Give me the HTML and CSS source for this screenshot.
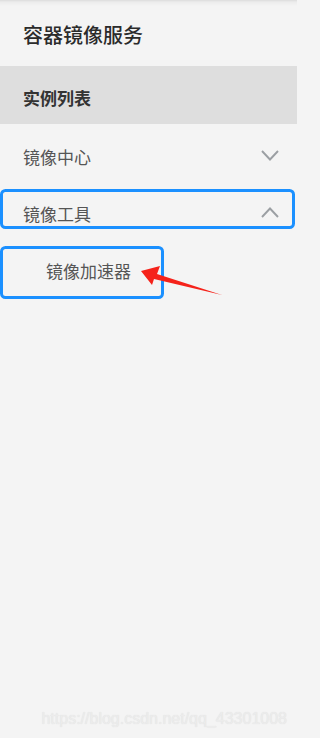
FILE: index.html
```html
<!DOCTYPE html>
<html lang="zh">
<head>
<meta charset="utf-8">
<title>容器镜像服务</title>
<link rel="stylesheet" href="styles.css">
</head>
<body>
<div class="sidebar">
  <div class="title">容器镜像服务</div>
  <div class="item active">实例列表</div>
  <div class="menu">
    <div class="item group">
      <span>镜像中心</span>
      <svg class="chev" width="18" height="11" viewBox="0 0 18 11"><polyline points="1,1 9,9.5 17,1" fill="none" stroke="#9b9fa3" stroke-width="1.9"/></svg>
    </div>
    <div class="item group">
      <span>镜像工具</span>
      <svg class="chev" width="18" height="11" viewBox="0 0 18 11"><polyline points="1,10 9,1.5 17,10" fill="none" stroke="#9b9fa3" stroke-width="1.9"/></svg>
    </div>
    <div class="item sub">镜像加速器</div>
  </div>
  <div class="watermark">https://blog.csdn.net/qq_43301008</div>
  <svg class="annot" width="297" height="738" viewBox="0 0 297 738">
    <rect x="1.5" y="190.5" width="292" height="37" rx="4" fill="none" stroke="#1b90ff" stroke-width="3"/>
    <rect x="1.5" y="247.5" width="161" height="50" rx="4" fill="none" stroke="#1b90ff" stroke-width="3"/>
    <polygon points="141,271 160,266 157,274 222,295 154,279 152,285" fill="#f5221a"/>
  </svg>
</div>
</body>
</html>
```
FILE: styles.css
```css
html, body {
  margin: 0;
  padding: 0;
  background: #f4f4f4;
}
body {
  font-family: "Noto Sans CJK SC", "Noto Sans", sans-serif;
}
.sidebar {
  position: relative;
  width: 297px;
  height: 738px;
  background: linear-gradient(to bottom, #dcdcdc 0px, #ececec 2px, #f4f4f4 6px);
  overflow: hidden;
}
.title {
  height: 66px;
  box-sizing: border-box;
  padding: 2px 0 0 23px;
  display: flex;
  align-items: center;
  font-size: 20px;
  color: #2b2b2b;
  font-weight: 500;
}
.item {
  display: flex;
  align-items: center;
  box-sizing: border-box;
}
.active {
  height: 58px;
  padding: 4px 0 0 23px;
  background: #dedede;
  font-size: 17px;
  font-weight: bold;
  color: #333;
}
.menu {
  padding-top: 4px;
}
.group {
  height: 57px;
  padding: 0 18px 0 23px;
  justify-content: space-between;
  font-size: 17px;
  color: #555;
}
.chev {
  margin-top: -3px;
}
.sub {
  height: 57px;
  padding-left: 46px;
  font-size: 17px;
  color: #555;
}
.watermark {
  position: absolute;
  right: 10px;
  bottom: 10px;
  font-family: "Liberation Sans", Arial, sans-serif;
  font-size: 16px;
  color: #ececec;
  text-shadow: 0 0 1px #dcdcdc;
}
.annot {
  position: absolute;
  left: 0;
  top: 0;
  pointer-events: none;
}
```
